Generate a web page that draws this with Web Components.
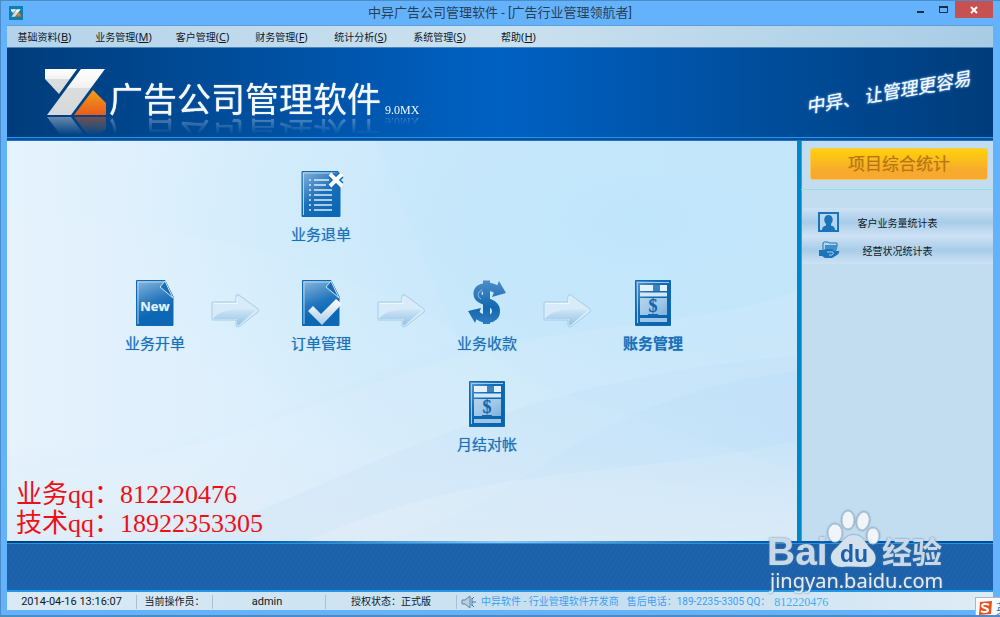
<!DOCTYPE html>
<html lang="zh-CN">
<head>
<meta charset="utf-8">
<meta name="viewport" content="width=device-width, initial-scale=1">
<title>中异广告公司管理软件</title>
<style>
  body {
    margin: 0;
    font-family: Roboto, "Noto Sans CJK SC", sans-serif;
    font-size: 10px;
    color: #10181f;
  }
</style>
</head>
<body>
<app-window>
  <title-bar slot="title">中异广告公司管理软件 - [广告行业管理领航者]</title-bar>
  <menu-bar slot="menu">
    <menu-entry key="B">基础资料</menu-entry>
    <menu-entry key="M">业务管理</menu-entry>
    <menu-entry key="C">客户管理</menu-entry>
    <menu-entry key="F">财务管理</menu-entry>
    <menu-entry key="S">统计分析</menu-entry>
    <menu-entry key="S">系统管理</menu-entry>
    <menu-entry key="H">帮助</menu-entry>
  </menu-bar>
  <brand-banner slot="banner">
    广告公司管理软件
    <span slot="version">9.0MX</span>
    <span slot="slogan">中异、 让管理更容易</span>
  </brand-banner>
  <work-flow slot="main"></work-flow>
  <side-panel slot="side">
    <span slot="heading">项目综合统计</span>
    <side-link icon="person">客户业务量统计表</side-link>
    <side-link icon="folder">经营状况统计表</side-link>
  </side-panel>
  <status-bar slot="status"></status-bar>
  <site-mark slot="overlay"></site-mark>
  <ime-badge slot="overlay">英</ime-badge>
</app-window>

<script>
// 1. ICONS _______________________________________________ */
const icons = {
  refund: `
    <svg viewBox="0 0 48 46">
      <defs><linearGradient id="g" x1="0" y1="0" x2=".6" y2="1"><stop offset="0" stop-color="#86b4dc"/><stop offset=".6" stop-color="#1a6fb8"/><stop offset="1" stop-color="#0c68b4"/></linearGradient></defs>
      <path d="M5 .5h36l2 3v42H5z" fill="url(#g)" stroke="#0f6ab5"/>
      <path d="M6.500 44V2H38" fill="none" stroke="#b5d4ec"/>
      <g stroke="#dcebf7" stroke-width="1.500">
        <path d="M12 9h2M12 14h2M12 19h2M12 24h2M12 29h2M12 34h2M12 39h2"/>
        <path d="M17 9h15M17 14h12M17 19h18M17 24h18M17 29h18M17 34h18M17 39h18"/>
      </g>
      <path d="M34 4l10 10M44 4l-10 10" stroke="#0f6ab5" stroke-width="7"/>
      <path d="M33 3l12 12M45 3l-12 12" stroke="#fff" stroke-width="4"/>
    </svg>`,
  create: `
    <svg viewBox="0 0 48 46">
      <defs><linearGradient id="g" x1="0" y1="0" x2=".3" y2="1"><stop offset="0" stop-color="#8ab8de"/><stop offset=".55" stop-color="#2577bd"/><stop offset=".8" stop-color="#0c68b4"/></linearGradient></defs>
      <path d="M5.500 .5H34l8 16v29H5.500z" fill="url(#g)" stroke="#0f6ab5"/>
      <path d="M7 44V2h26" fill="none" stroke="#b5d4ec"/>
      <path d="M34 1l-5 6 13 11z" fill="#1c6fb6" stroke="#cfe5f5"/>
      <text x="24" y="31" text-anchor="middle" font-family="Open Sans, sans-serif" font-weight="700" font-size="13" fill="#e2f1fb">New</text>
    </svg>`,
  order: `
    <svg viewBox="0 0 48 46">
      <defs>
        <linearGradient id="g" x1="0" y1="0" x2=".3" y2="1"><stop offset="0" stop-color="#8ab8de"/><stop offset=".55" stop-color="#2577bd"/><stop offset=".8" stop-color="#0c68b4"/></linearGradient>
        <linearGradient id="c" x1="0" y1="0" x2="0" y2="1"><stop offset="0" stop-color="#fff"/><stop offset="1" stop-color="#a9cdeb"/></linearGradient>
      </defs>
      <path d="M5.500 .5H34l8 16v29H5.500z" fill="url(#g)" stroke="#0f6ab5"/>
      <path d="M7 44V2h26" fill="none" stroke="#b5d4ec"/>
      <path d="M34 1l-5 6 13 11z" fill="#1c6fb6" stroke="#cfe5f5"/>
      <path d="M11 31l5-5 8 8 15-15 6 5-20 21z" fill="url(#c)"/>
    </svg>`,
  receive: `
    <svg viewBox="0 0 48 46">
      <defs><linearGradient id="g" gradientUnits="userSpaceOnUse" x1="0" y1="0" x2="0" y2="46"><stop offset="0" stop-color="#4c8fc8"/><stop offset=".6" stop-color="#1467b0"/><stop offset="1" stop-color="#2f7fc2"/></linearGradient></defs>
      <path d="M35 11C29 5 14 5 14.500 14 15 23 33 20 33 31 33 41 20 41 13 34" fill="none" stroke="url(#g)" stroke-width="8"/>
      <path d="M20 .5h7v43.500h-7zM36 1l7 12-14 4zM5 31l13-3-6 15z" fill="url(#g)"/>
      <path d="M19 10c-5 2-5 7-1 9" fill="none" stroke="#8fbfe4"/>
    </svg>`,
  account: `
    <svg viewBox="0 0 48 46">
      <defs>
        <linearGradient id="g" x1="0" y1="0" x2="1" y2="1"><stop offset="0" stop-color="#5a9bd0"/><stop offset=".4" stop-color="#0f69b4"/><stop offset="1" stop-color="#0a62ae"/></linearGradient>
        <linearGradient id="c" x1="0" y1="0" x2="1" y2="1"><stop offset="0" stop-color="#b4d3ec"/><stop offset=".5" stop-color="#a0c8e8"/><stop offset="1" stop-color="#7fb2dc"/></linearGradient>
      </defs>
      <path d="M6.500 .5h35v45h-35z" fill="url(#g)" stroke="#0f69b4"/>
      <path d="M8.500 43V2.500H40" fill="none" stroke="#a4caea"/>
      <path d="M11 5h13v6H11zM31 5h7v6h-7z" fill="#e4f1fb"/>
      <path d="M24 5h7v6h-7z" fill="#3b84c2"/>
      <path d="M11 12.500h27v4H11z" fill="#d3e7f6"/>
      <path d="M11 18h27v17H11z" fill="url(#c)"/>
      <path d="M11 38h27v4H11z" fill="#9cc5e6"/>
      <path d="M19 34h10v2H19z" fill="#0f69b4"/>
      <text x="24" y="32" text-anchor="middle" font-family="Liberation Serif, serif" font-weight="700" font-size="18" fill="#0f66b0">$</text>
    </svg>`,
  arrow: `
    <svg viewBox="0 0 48 34">
      <defs><linearGradient id="a" x1="0" y1="0" x2="0" y2="1"><stop offset="0" stop-color="#cfe5f6"/><stop offset="1" stop-color="#92c3e6"/></linearGradient></defs>
      <path d="M2 8h23V2q0-2 3-1l19 14q1 1 0 3L29 32q-3 2-4 0v-6H2q-1 0-1-1V9q0-1 1-1z" fill="#d8ebf9" stroke="#a2cceb"/>
      <path d="M2 25C8 16 24 14 45 16L28 31q-2 1-2-1v-5z" fill="url(#a)"/>
      <path d="M3 9.500h23V3" fill="none" stroke="#eef8fe"/>
    </svg>`,
  person: `
    <svg viewBox="0 0 22 20">
      <path d="M1 1h19v18H1z" fill="#b5d5ef" stroke="#1b74ba" stroke-width="2"/>
      <path d="M4 18c0-3 2-4 4-4.500v-1.500C5 9 6 3 10.500 3S16 9 13 12v1.500c2 .5 4 1.500 4 4.500z" fill="#1b74ba"/>
    </svg>`,
  folder: `
    <svg viewBox="0 0 22 20">
      <path d="M5 10V3l1-1h4l1 1h8v2" fill="none" stroke="#1b74ba"/>
      <path d="M7 5h13l-2 7H7z" fill="#3f8fcd"/>
      <path d="M1 10h4l3-1h6l2 2h5q1 2-2 4l-5 3H7l-3-2H1z" fill="#1b74ba"/>
      <path d="M9 12h6q1 2-1 3h-3" fill="none" stroke="#a8cfec"/>
    </svg>`,
  speaker: `
    <svg viewBox="0 0 16 14">
      <path d="M1 5h3l5-4v12L4 9H1z" fill="#b9cfe0" stroke="#5e86a8"/>
      <path d="M11 4l2-2M11 7h4M11 10l2 2M11 3v8" fill="none" stroke="#3f78a8"/>
    </svg>`,
  logo: `
    <svg viewBox="0 0 62 48">
      <defs>
        <linearGradient id="w" x1="0" y1="0" x2="0" y2="1"><stop offset="0" stop-color="#fff"/><stop offset=".4" stop-color="#f2f2f2"/><stop offset=".42" stop-color="#dcdddd"/><stop offset="1" stop-color="#d5d9dc"/></linearGradient>
        <linearGradient id="o" x1="0" y1="0" x2="0" y2="1"><stop offset="0" stop-color="#f2a019"/><stop offset="1" stop-color="#ea5b1c"/></linearGradient>
      </defs>
      <path d="M0 1h32L14 26 0 11z" fill="url(#w)"/>
      <path d="M36 1h24L26 47H2z" fill="url(#w)"/>
      <path d="M48 22l13 13v12H29z" fill="url(#o)"/>
    </svg>`
}

// shared helper: one open root, filled from a template
function attach(element, html) {
  const template = document.createElement('template')
  template.innerHTML = html
  element.attachShadow({mode: 'open'})
  element.shadowRoot.appendChild(template.content.cloneNode(true))
}

// 2. WINDOW ______________________________________________ */
class AppWindow extends HTMLElement {
  constructor() {
    super()
    attach(this, `
      <style>
        :host {
          position: relative;
          display: flex;
          flex-direction: column;
          box-sizing: border-box;
          min-height: 100vh;
          overflow: hidden;
          background: #65b2fc;
          border: solid #4a8cc8;
          border-width: 1px 0 2px 1px;
          padding: 0 7px 5px 6px;
        }
        .body { flex: 1; display: flex; }
        ::slotted([slot=main]) { flex: 1; }
        ::slotted([slot=side]) { flex: none; }
        .band {
          height: 46px;
          border-top: 1px solid #1f98e4;
          border-bottom: 2px solid #2497e4;
          background: repeating-linear-gradient(120deg, #1b60a8 0 2px, #1d64ad 2px 4px);
        }
        .line { height: 2px; background: linear-gradient(90deg, #003f82, #0058b0 25%, #94c5ee 50%, #0a58b0 75%, #004a98); }
      </style>
      <slot name="title"></slot>
      <slot name="menu"></slot>
      <slot name="banner"></slot>
      <div class="body"><slot name="main"></slot><slot name="side"></slot></div>
      <div class="line"></div>
      <div class="band"></div>
      <slot name="status"></slot>
      <slot name="overlay"></slot>
    `)
  }
}

class TitleBar extends HTMLElement {
  constructor() {
    super()
    attach(this, `
      <style>
        :host {
          display: grid;
          grid-template-columns: 1fr auto 1fr;
          height: 24px;
          font-size: 13px;
          line-height: 24px;
          color: #263f58;
        }
        .icon {
          width: 10px;
          height: 10px;
          margin: 5px 2px;
          padding: 2px;
          background: #0d7fae;
        }
        .icon svg { display: block; width: 10px; height: 10px; }
        .buttons { display: flex; justify-content: flex-end; align-items: flex-start; }
        button {
          width: 23px;
          height: 17px;
          padding: 0;
          border: 0;
          background: none;
        }
        button svg { display: block; margin: 0 auto; }
        .close { width: 38px; background: #c75050; }
      </style>
      <div class="icon">${icons.logo}</div>
      <div><slot></slot></div>
      <div class="buttons">
        <button aria-label="最小化"><svg width="9" height="17"><path d="M1 11h7" stroke="#1c2c3c" stroke-width="2"/></svg></button>
        <button aria-label="最大化"><svg width="10" height="17"><path d="M.5 5.500h8v6h-8z" fill="none" stroke="#1c2c3c"/><path d="M0 6h9" stroke="#1c2c3c" stroke-width="2"/></svg></button>
        <button class="close" aria-label="关闭"><svg width="8" height="17"><path d="M1 6l6 6M7 6l-6 6" stroke="#fff" stroke-width="2"/></svg></button>
      </div>
    `)
  }
}

// 3. MENU ________________________________________________ */
class MenuBar extends HTMLElement {
  constructor() {
    super()
    attach(this, `
      <style>
        :host { display: block; }
        nav {
          display: flex;
          height: 21px;
          border-top: 1px solid #5c9fdc;
          border-bottom: 1px solid #4a86b8;
          background: linear-gradient(90deg, #b4d3ea, #cbe1ef 50%, #a8cce5);
        }
      </style>
      <nav><slot></slot></nav>
    `)
  }
}

class MenuEntry extends HTMLElement {
  constructor() {
    super()
    attach(this, `
      <style>
        :host { display: block; width: 79px; }
        button {
          width: 100%;
          height: 21px;
          padding: 1px 4px 0 0;
          border: 0;
          background: none;
          color: inherit;
          font: inherit;
          line-height: 20px;
        }
        .key { font-family: "Noto Sans", sans-serif; font-size: 11px; }
      </style>
      <button><slot></slot><span class="key">(<u></u>)</span></button>
    `)
    this.shadowRoot.querySelector('u').textContent = this.getAttribute('key')
  }
}

// 4. BANNER ______________________________________________ */
class BrandBanner extends HTMLElement {
  constructor() {
    super()
    attach(this, `
      <style>
        :host {
          display: flex;
          align-items: flex-start;
          box-sizing: border-box;
          height: 93px;
          padding: 20px 22px 0 38px;
          color: #f4f8fc;
          background: linear-gradient(90deg, #003c7a, #0061c3 50%, #003c7a);
          border-bottom: 1px solid #1f6fc4;
          box-shadow: inset 0 -2px #0a4fa4, inset 0 -3px #1b9be6;
        }
        .logo { width: 62px; height: 48px; -webkit-box-reflect: below 0 linear-gradient(transparent 60%, rgba(0, 0, 0, .5)); }
        .logo svg { display: block; }
        .name {
          margin: 12px 0 0 2px;
          font-size: 34px;
          line-height: 40px;
          text-shadow: 0 0 1px #f4f8fc;
          -webkit-box-reflect: below -6px linear-gradient(transparent 50%, rgba(0, 0, 0, .4));
        }
        .version {
          margin: 34px 0 0 4px;
          font: 12px/16px "Liberation Serif", serif;
          -webkit-box-reflect: below -4px linear-gradient(transparent 30%, rgba(0, 0, 0, .4));
        }
        .slogan {
          margin: 13px 0 0 auto;
          font-size: 18px;
          line-height: 24px;
          font-style: italic;
          text-shadow: 0 0 3px #6fb0f0, 0 0 1px #fff;
          transform: rotate(-10deg);
        }
      </style>
      <div class="logo">${icons.logo}</div>
      <div class="name"><slot></slot></div>
      <div class="version"><slot name="version"></slot></div>
      <div class="slogan"><slot name="slogan"></slot></div>
    `)
  }
}

// 5. WORKFLOW ____________________________________________ */
class FlowNode extends HTMLElement {
  constructor() {
    super()
    attach(this, `
      <style>
        :host { display: block; color: #1b71b8; }
        :host([strong]) { font-weight: 700; }
        button {
          display: flex;
          flex-direction: column;
          align-items: center;
          gap: 8px;
          width: 100%;
          padding: 0;
          border: 0;
          background: none;
          color: inherit;
          font: inherit;
          font-size: 15px;
          line-height: 20px;
          text-shadow: 0 0 1px #6fa9d8;
        }
        svg { width: 48px; height: 46px; }
      </style>
      <button>${icons[this.getAttribute('icon')]}<span><slot></slot></span></button>
    `)
  }
}

class FlowArrow extends HTMLElement {
  constructor() {
    super()
    attach(this, `
      <style>
        :host { display: block; padding: 14px 8px; }
        svg { display: block; width: 48px; height: 34px; }
      </style>
      ${icons.arrow}
    `)
  }
}

class WorkFlow extends HTMLElement {
  constructor() {
    super()
    attach(this, `
      <style>
        :host {
          position: relative;
          display: flex;
          flex-direction: column;
          justify-content: space-between;
          background:
            linear-gradient(0deg, rgba(218, 234, 247, .9), rgba(218, 234, 247, 0) 25%),
            radial-gradient(ellipse at 80% 20%, #c0e6fb, rgba(192, 230, 251, 0) 60%),
            linear-gradient(90deg, #e4f3fd, #d2eafb 50%, #c9e4f9);
        }
        .swoosh { position: absolute; width: 100%; height: 100%; }
        .steps {
          position: relative;
          display: grid;
          grid-template-columns: 96px 70px 96px 70px 96px 70px 96px;
          grid-template-rows: 109px 101px auto;
          justify-content: center;
          padding: 30px 0 0 4px;
        }
        .steps > * { grid-row: 2; }
        .steps > .top { grid-area: 1 / 3; }
        .steps > .bottom { grid-area: 3 / 5; }
        .contact {
          position: relative;
          margin: 0;
          padding: 0 0 3px 9px;
          font: 26px/29px "Liberation Serif", "Noto Sans CJK SC", serif;
          color: #ee1018;
        }
      </style>
      <svg class="swoosh" viewBox="0 0 790 400" preserveAspectRatio="none">
        <path d="M0 70C200 85 380 130 520 240L790 330V400H0z" fill="#fff" fill-opacity=".06"/>
        <path d="M370 0L450 200 340 245C180 310 80 320 0 330V0z" fill="#fff" fill-opacity=".06"/>
        <path d="M0 330C180 330 330 250 450 215S680 190 790 150V230C560 260 520 370 370 400H0z" fill="#fff" fill-opacity=".09"/>
        <path d="M170 400C330 350 480 240 790 215V300C600 340 480 320 300 400z" fill="#a9d2f4" fill-opacity=".1"/>
      </svg>
      <div class="steps">
        <flow-node class="top" icon="refund">业务退单</flow-node>
        <flow-node icon="create">业务开单</flow-node>
        <flow-arrow></flow-arrow>
        <flow-node icon="order">订单管理</flow-node>
        <flow-arrow></flow-arrow>
        <flow-node icon="receive">业务收款</flow-node>
        <flow-arrow></flow-arrow>
        <flow-node icon="account" strong>账务管理</flow-node>
        <flow-node class="bottom" icon="account">月结对帐</flow-node>
      </div>
      <p class="contact">业务qq&#xFF1A;812220476<br>技术qq&#xFF1A;18922353305</p>
    `)
    // the main row alternates node and arrow, one per column
    const row = this.shadowRoot.querySelectorAll('.steps > :not(.top):not(.bottom)')
    row.forEach((item, index) => { item.style.gridColumn = index + 1 })
  }
}

// 6. SIDE PANEL __________________________________________ */
class SidePanel extends HTMLElement {
  constructor() {
    super()
    attach(this, `
      <style>
        :host {
          display: block;
          width: 192px;
          border-left: 4px solid #0088c6;
          box-shadow: inset 1px 0 #16b0e6;
          background: #c3ddf0;
        }
        .head { padding: 7px 5px 9px 9px; border-bottom: 1px solid #9adbe4; }
        button {
          display: block;
          width: 100%;
          height: 32px;
          padding: 0;
          border: 1px solid #f5c860;
          border-radius: 3px;
          background: linear-gradient(#ffd20a, #f8ab2c 70%, #f7a830);
          color: #b9750f;
          font: inherit;
          font-size: 17px;
          line-height: 28px;
          text-shadow: 0 0 1px #d0962c;
        }
        .links { padding: 18px 0 0 1px; }
      </style>
      <div class="head"><button><slot name="heading"></slot></button></div>
      <div class="links"><slot></slot></div>
    `)
  }
}

class SideLink extends HTMLElement {
  constructor() {
    super()
    attach(this, `
      <style>
        :host { display: block; }
        a {
          display: flex;
          align-items: center;
          height: 28px;
          padding: 0 38px 0 16px;
          color: inherit;
          text-decoration: none;
          background: linear-gradient(#cde2f4, #a8cce8 50%, #cde2f4);
        }
        svg { flex: none; width: 22px; height: 20px; }
        span { flex: 1; text-align: center; }
      </style>
      <a href="#">${icons[this.getAttribute('icon')]}<span><slot></slot></span></a>
    `)
  }
}

// 7. STATUS BAR __________________________________________ */
class StatusBar extends HTMLElement {
  constructor() {
    super()
    attach(this, `
      <style>
        :host {
          display: flex;
          align-items: center;
          box-sizing: border-box;
          height: 18px;
          padding-top: 2px;
          line-height: 16px;
          background: linear-gradient(90deg, #d9eaf5, #c5dff0 60%, #dfecf6);
        }
        span {
          box-sizing: border-box;
          height: 14px;
          line-height: 14px;
          border-right: 1px solid #a9c0d0;
          text-align: center;
        }
        .time { width: 130px; font-size: 11px; }
        .label { width: 76px; }
        .user { width: 113px; padding-right: 4px; font-size: 11px; }
        .state { width: 131px; }
        .news { display: flex; align-items: center; gap: 4px; padding-left: 4px; color: #3f9df2; white-space: nowrap; }
        .news svg { width: 16px; height: 14px; }
        .phone { margin-left: 4px; }
        b { font: 12px/16px "Liberation Serif", serif; color: #3cb0ee; }
      </style>
      <span class="time">2014-04-16 13:16:07</span>
      <span class="label">当前操作员&#xFF1A;</span>
      <span class="user">admin</span>
      <span class="state">授权状态&#xFF1A;正式版</span>
      <div class="news">
        ${icons.speaker}
        <div>中异软件 - 行业管理软件开发商</div>
        <div class="phone">售后电话&#xFF1A;189-2235-3305 QQ&#xFF1A;</div>
        <b>812220476</b>
      </div>
    `)
  }
}

// 8. OVERLAYS ____________________________________________ */
class SiteMark extends HTMLElement {
  constructor() {
    super()
    attach(this, `
      <style>
        :host { position: absolute; right: 52px; bottom: 20px; width: 182px; height: 90px; pointer-events: none; }
        svg { display: block; width: 182px; height: 90px; filter: drop-shadow(0 0 1px #5f7f9f); }
      </style>
      <svg viewBox="0 0 182 90" fill="#d3e1ef" fill-opacity=".92">
        <text x="1" y="60" font-family="Liberation Sans, sans-serif" font-weight="700" font-size="39">Bai</text>
        <g fill="#f0f5fa" fill-opacity="1" stroke="#b4c4d4">
          <ellipse cx="69" cy="28" rx="7" ry="9"/>
          <ellipse cx="82" cy="15" rx="6" ry="9"/>
          <ellipse cx="97" cy="16" rx="6" ry="9" transform="rotate(12 97 16)"/>
          <ellipse cx="107" cy="31" rx="6" ry="8"/>
        </g>
        <path d="M88 30c9 0 11 8 17 14 8 7 5 18-5 18-8 0-15-1-24 0-12 0-14-12-7-18s10-14 19-14z" fill="#d3e1ef" fill-opacity="1"/>
        <text x="88" y="57" text-anchor="middle" font-family="Liberation Sans, sans-serif" font-weight="700" font-size="23" fill="#1b60a8" fill-opacity="1">du</text>
        <text x="116" y="58" font-family="Noto Sans CJK SC, sans-serif" font-weight="700" font-size="30">经验</text>
        <text x="4" y="83" font-family="Noto Sans, sans-serif" font-size="20" fill="#e4edf6" fill-opacity="1">jingyan.baidu.com</text>
      </svg>
    `)
  }
}

class ImeBadge extends HTMLElement {
  constructor() {
    super()
    attach(this, `
      <style>
        :host {
          position: absolute;
          right: 0;
          bottom: -2px;
          box-sizing: border-box;
          display: flex;
          align-items: center;
          gap: 4px;
          width: 25px;
          height: 20px;
          padding-left: 2px;
          overflow: hidden;
          white-space: nowrap;
          background: #f8fafc;
          border: solid #a8b8c6;
          border-width: 1px 0 0 1px;
          color: #2a78c0;
          font-size: 13px;
        }
        svg { flex: none; width: 14px; height: 14px; }
      </style>
      <svg viewBox="0 0 14 14">
        <path d="M2 1l12-1-1 13-12 1z" fill="#e8501c"/>
        <path d="M11 4C8 2 4 3 4 5s6 2 6 4-4 3-7 1" fill="none" stroke="#fff" stroke-width="2"/>
      </svg>
      <slot></slot>
    `)
  }
}

// 9. CREATE CUSTOM ELEMENTS ______________________________ */
window.customElements.define('app-window', AppWindow)
window.customElements.define('title-bar', TitleBar)
window.customElements.define('menu-bar', MenuBar)
window.customElements.define('menu-entry', MenuEntry)
window.customElements.define('brand-banner', BrandBanner)
window.customElements.define('flow-node', FlowNode)
window.customElements.define('flow-arrow', FlowArrow)
window.customElements.define('work-flow', WorkFlow)
window.customElements.define('side-panel', SidePanel)
window.customElements.define('side-link', SideLink)
window.customElements.define('status-bar', StatusBar)
window.customElements.define('site-mark', SiteMark)
window.customElements.define('ime-badge', ImeBadge)
</script>
</body>
</html>
